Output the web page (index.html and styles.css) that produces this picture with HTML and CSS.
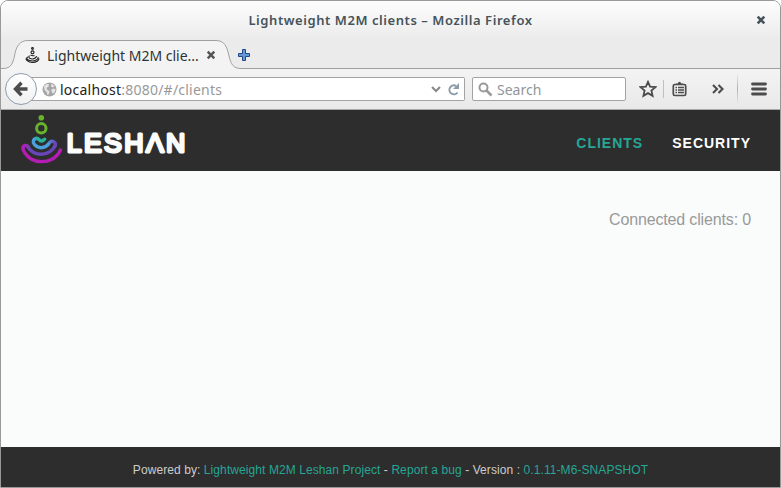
FILE: index.html
```html
<!DOCTYPE html>
<html lang="en">
<head>
<meta charset="utf-8">
<title>Lightweight M2M clients</title>
<link rel="stylesheet" href="styles.css">
</head>
<body>
<div class="window">
  <div class="titlebar">
    <span class="window-title">Lightweight M2M clients – Mozilla Firefox</span>
    <svg class="window-close" width="10" height="10" viewBox="0 0 10 10"><path d="M1.700 1.700l6.600 6.600M8.300 1.700l-6.600 6.600" stroke="#46535b" stroke-width="2.600"/></svg>
  </div>
  <div class="tabstrip">
    <svg class="tab-shape" width="779" height="30" viewBox="0 0 779 30"><path d="M0 28.500H2C10 28.500 12 23 13.500 16C15 6 19 .500 27 .500H215C223 .500 226 6 228 16C230 24 232 28.500 240 28.500H779V30H0Z" fill="#f3f3f3"/><path d="M0 28.500H2C10 28.500 12 23 13.500 16C15 6 19 .500 27 .500H215C223 .500 226 6 228 16C230 24 232 28.500 240 28.500H779" fill="none" stroke="#a0a0a0"/></svg>
    <div class="tab">
      <svg class="favicon" width="16" height="18" viewBox="0 0 16 18" fill="none" stroke="#222" stroke-width="1.150"><circle cx="7.500" cy="2.500" r=".9"/><circle cx="7.500" cy="6.300" r="1.500"/><path d="M5.500 9.500c1-1 2 1 4 0M4.500 9.700c-2 2 1 3.300 3 3.300s4-1.500 4-3M3 11c-3 1 0 4 4.500 4s6-3 5.500-4M1.500 12.500c-1.500 0 1 4 6 4 4 0 6.500-2 6.500-4"/></svg>
      <span class="tab-title">Lightweight M2M clie...</span>
      <svg class="tab-close" width="10" height="10" viewBox="0 0 10 10"><path d="M1.700 1.700l6.600 6.600M8.300 1.700l-6.600 6.600" stroke="#555" stroke-width="2.400"/></svg>
    </div>
    <svg class="tab-new" width="14" height="14" viewBox="0 0 14 14"><path d="M5.500 1.500h3v4h4v3h-4v4h-3v-4h-4v-3h4z" fill="#6596d0" stroke="#204a87" stroke-linejoin="round"/></svg>
  </div>
  <div class="toolbar">
    <div class="back"><svg width="16" height="16" viewBox="0 0 16 16" fill="none" stroke="#4c4c4c" stroke-width="3.400"><path d="M3 8H14.500M8.500 1.800L2.500 8l6 6.200"/></svg></div>
    <div class="address">
      <svg class="globe" width="15" height="15" viewBox="0 0 15 15"><circle cx="7.500" cy="7.500" r="7" fill="#a6a6a6"/><path d="M2 4l3-2.300 2 .8-.5 2L4.500 6l1 2 2 1-.5 3-1.500 1-1-3-2-2zM9.500 1.500l3 2.500-1.500 1.500-2-1zM9 7.500l3-1 1.700 1-1.500 3.500-1.700.5z" fill="#e4e4e4"/></svg>
      <span class="url"><b>localhost</b>:8080/#/clients</span>
      <svg class="chevron" width="10" height="7" viewBox="0 0 10 7"><path d="M1 1l4 4 4-4" fill="none" stroke="#888" stroke-width="2"/></svg>
      <svg class="reload" width="13" height="13" viewBox="0 0 13 13"><path d="M9 2.800A4.500 4.500 0 1 0 10.500 9.500" fill="none" stroke="#8b9cab" stroke-width="2"/><path d="M12 0v6H6z" fill="#8b9cab"/></svg>
    </div>
    <div class="search">
      <svg width="15" height="15" viewBox="0 0 15 15" fill="none" stroke="#999"><circle cx="5.500" cy="5.500" r="4" stroke-width="2"/><path d="M8.500 8.500l5 5" stroke-width="2.500"/></svg>
      <span>Search</span>
    </div>
    <div class="tools">
      <svg class="star" width="18" height="18" viewBox="0 0 18 18"><path d="M9 1.800l2.100 4.800 5.300.5-4 3.500 1.200 5.200L9 13.100l-4.600 2.700 1.200-5.200-4-3.500 5.300-.5z" fill="none" stroke="#4c4c4c" stroke-width="1.800" stroke-linejoin="miter"/></svg>
      <i class="divider"></i>
      <svg class="clipboard" width="15" height="16" viewBox="0 0 15 16"><rect x="1.300" y="3.500" width="12.400" height="11" rx="1.500" fill="none" stroke="#4c4c4c" stroke-width="1.700"/><path d="M4 4V2.500h2Q6 .8 7.500.8T9 2.500h2V4z" fill="#4c4c4c"/><path d="M3.500 6.500h1.500M6 6.500h6M3.500 9h1.500M6 9h6M3.500 11.500h1.500M6 11.500h6" stroke="#4c4c4c" stroke-width="1.300"/></svg>
      <svg class="overflow" width="12" height="10" viewBox="0 0 12 10"><path d="M1 1l4 4-4 4M6.500 1l4 4-4 4" fill="none" stroke="#4c4c4c" stroke-width="2.100"/></svg>
      <i class="divider tall"></i>
      <svg class="menu" width="16" height="14" viewBox="0 0 16 14"><path d="M1.500 2h13M1.500 7h13M1.500 12h13" stroke="#4c4c4c" stroke-width="2.800" stroke-linecap="round"/></svg>
    </div>
  </div>
  <header class="header">
    <svg class="logo" width="166" height="52" viewBox="0 0 166 52" role="img" aria-label="Leshan">
      <defs>
        <linearGradient id="robe" gradientUnits="userSpaceOnUse" x1="0" y1="0" x2="8" y2="0"><stop offset=".3" stop-color="#b41cb4"/><stop offset="1" stop-color="#6a45b8"/></linearGradient>
        <linearGradient id="arm" gradientUnits="userSpaceOnUse" x1="26" y1="0" x2="34" y2="0"><stop offset="0" stop-color="#4a9fdc"/><stop offset="1" stop-color="#6a45b8"/></linearGradient>
      </defs>
      <circle cx="20.300" cy="4.700" r="2.800" fill="#67b32e"/>
      <g fill="none" stroke-width="3.400" stroke-linecap="round">
        <circle cx="20.300" cy="15.300" r="4.700" stroke="#67b32e" stroke-width="3"/>
        <path d="M6.700 33.700C9.500 38 14 41.300 20.300 41.300C27 41.300 32 37 34 33" stroke="#6a45b8"/>
        <path d="M1.300 35.300C1.500 32 5 31.500 6.700 33.700" stroke="url(#robe)" transform="translate(.6 0)"/>
        <path d="M1.900 35.300C1.900 38 5.500 43 10 46C16 49.500 25 49.500 31 46.200C35 44 38 40.500 39.500 37" stroke="#b41cb4"/>
        <path d="M27.300 31.300C29 28.500 30.500 27.500 32.500 28.500C34.800 29.700 34.800 31.500 34 33" stroke="url(#arm)"/>
        <path d="M15.700 25.500C12 25.800 11.500 29 13.300 31.300C16.500 35.800 24 35.800 27.300 31.300" stroke="#4a9fdc"/>
        <path d="M15.700 25.300C18 25.300 18 28 20.300 28C22 28 22.500 27 23.700 26.200" stroke="#28b29c"/>
      </g>
      <text class="wordmark" x="45.700" y="39.300" textLength="118.700" lengthAdjust="spacing">LESHΛN</text>
    </svg>
    <nav class="nav"><a class="active">CLIENTS</a><a>SECURITY</a></nav>
  </header>
  <main class="content"><p>Connected clients: 0</p></main>
  <footer class="footer"><p>Powered by: <a>Lightweight M2M Leshan Project</a> - <a>Report a bug</a> - Version : <a>0.1.11-M6-SNAPSHOT</a></p></footer>
</div>
</body>
</html>
```
FILE: styles.css
```css
* { box-sizing: border-box; }
body { margin: 0; background: #fff; }
svg { display: block; flex: none; }
.window {
  width: 781px; height: 488px;
  display: flex; flex-direction: column;
  border: 1px solid #999; border-radius: 8px 8px 0 0;
  overflow: hidden;
  font-family: "Noto Sans", "Open Sans", sans-serif;
}
.titlebar {
  height: 39px; flex: none; position: relative;
  display: flex; align-items: center; justify-content: center;
  background: linear-gradient(#fdfdfd, #ebebeb);
}
.window-title { font-size: 13px; font-weight: 600; color: #46535b; letter-spacing: .56px; white-space: nowrap; margin-top: -2px; }
.window-close { position: absolute; right: 14px; top: 14px; }
.tabstrip { height: 30px; flex: none; position: relative; display: flex; background: #ebebeb; }
.tab-shape { position: absolute; left: 0; top: 0; }
.tab { position: relative; width: 218px; display: flex; align-items: center; padding-left: 24px; }
.favicon { margin-top: -1px; }
.tab-title { width: 160px; margin-left: 6px; font-size: 14px; color: #2e3436; white-space: nowrap; }
.tab-close { margin-left: -1px; margin-top: -1px; }
.tab-new { position: relative; margin: 8px 0 0 18px; }
.toolbar {
  height: 40px; flex: none; display: flex; align-items: center;
  background: linear-gradient(#f3f3f3, #e9e9e9); border-bottom: 1px solid #aaa;
}
.back {
  width: 32px; height: 32px; margin-left: 4px; margin-top: -1px; flex: none; position: relative;
  display: flex; align-items: center; justify-content: center;
  background: linear-gradient(#fff, #f1f1f1); border: 1px solid #8e9db2; border-radius: 50%;
}
.address {
  width: 434px; height: 24px; margin-left: -6px; margin-top: -1px; padding-left: 11px;
  display: flex; align-items: center;
  background: #fff; border: 1px solid #a3a3a3; border-left: 0; border-radius: 0 2px 2px 0;
}
.url { width: 372px; margin-left: 3px; font-size: 14px; letter-spacing: .23px; color: #999; white-space: nowrap; }
.url b { font-weight: 400; color: #222; }
.chevron { margin-left: -1px; }
.reload { margin-left: 6px; }
.search {
  width: 154px; height: 24px; margin-left: 7px; margin-top: -1px; padding-left: 5px;
  display: flex; align-items: center; gap: 4px;
  background: #fff; border: 1px solid #a3a3a3; border-radius: 2px;
  font-size: 14px; color: #929699;
}
.tools { display: flex; align-items: center; margin-top: -1px; }
.star { margin-left: 13px; }
.divider { width: 1px; height: 18px; margin-left: 6px; background: #c0c0c0; }
.clipboard { margin-left: 8px; }
.overflow { margin-left: 25px; }
.divider.tall { height: 32px; margin-left: 13px; background: linear-gradient(#eee, #aab2b9, #eee); }
.menu { margin-left: 13px; }
.header {
  height: 61px; flex: none; display: flex; align-items: flex-start; justify-content: space-between;
  padding: 3px 29px 0 20px; background: #2d2d2d;
}
.wordmark {
  font: 400 26.7px "Liberation Sans", sans-serif;
  fill: #fafcfc; stroke: #fafcfc; stroke-width: 2.9px; stroke-linejoin: round;
}
.nav {
  display: flex; gap: 29px; padding-top: 21px;
  font: 700 14px/18px "Liberation Sans", Arial, sans-serif; letter-spacing: 1px; color: #fff;
}
.nav .active, .footer a { color: #26a695; }
.content { flex: 1; padding: 39px 29px 0; background: #fafcfc; text-align: right; }
.content p { margin: 0; font: 16px/20px "Liberation Sans", Arial, sans-serif; letter-spacing: -.15px; color: #999; }
.footer { height: 40px; flex: none; background: #2d2d2d; text-align: center; }
.footer p { margin: 0; padding-top: 14px; font: 12px/18px "Liberation Sans", Arial, sans-serif; letter-spacing: .083px; color: #ccc; }
```
